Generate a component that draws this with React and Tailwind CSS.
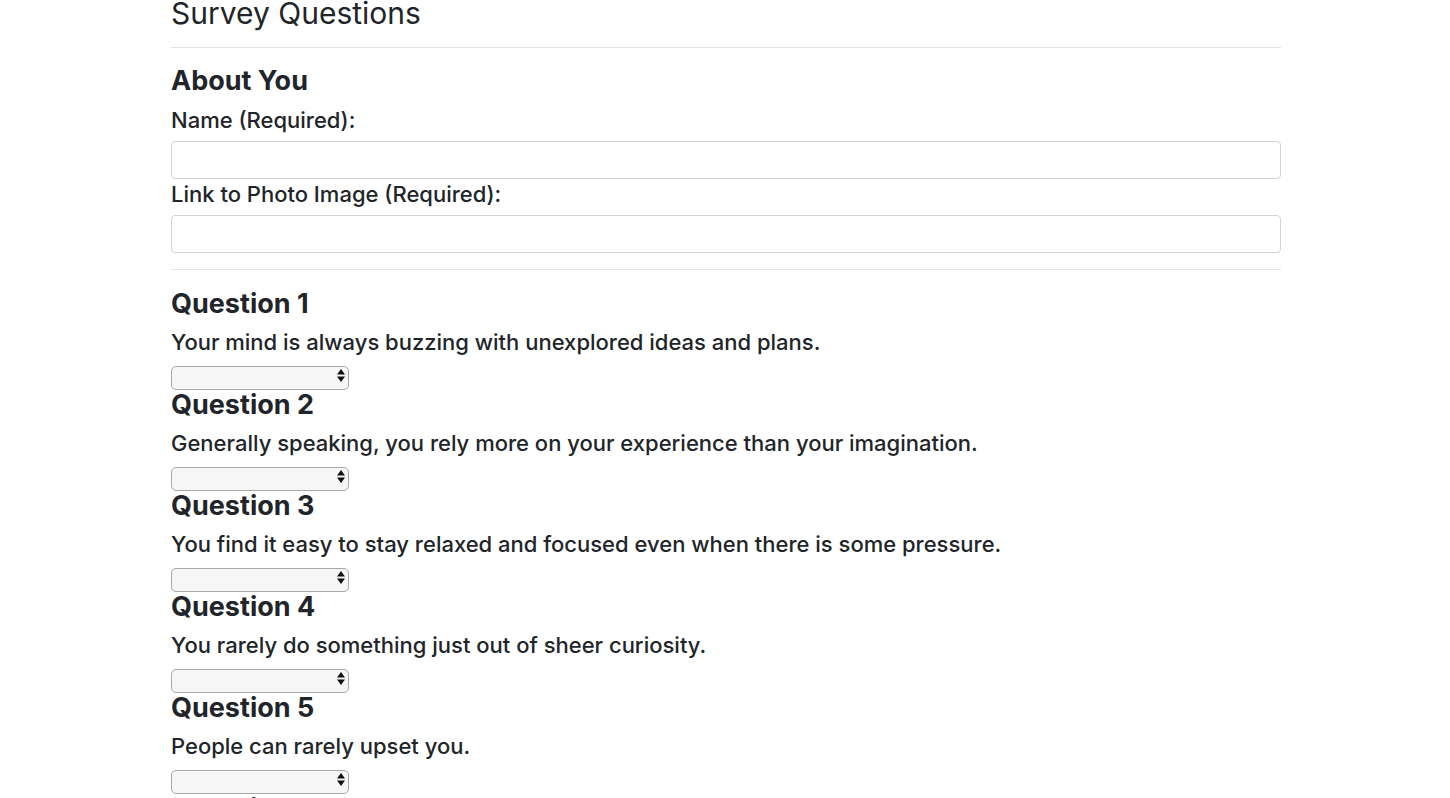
import React from "react";

const questions = [
  "Your mind is always buzzing with unexplored ideas and plans.",
  "Generally speaking, you rely more on your experience than your imagination.",
  "You find it easy to stay relaxed and focused even when there is some pressure.",
  "You rarely do something just out of sheer curiosity.",
  "People can rarely upset you.",
  "You often make a backup plan for a backup plan.",
];

const SelectBox = () => (
  <div className="relative w-[178px] h-[24px]">
    <select className="appearance-none w-full h-full rounded-[5px] border border-[#a9a9a9] bg-[#f6f6f6] text-[13px] px-2 outline-none">
      <option value=""></option>
      <option value="1">1 (Strongly Disagree)</option>
      <option value="2">2</option>
      <option value="3">3</option>
      <option value="4">4</option>
      <option value="5">5 (Strongly Agree)</option>
    </select>
    <svg
      className="pointer-events-none absolute right-[4px] top-[5px]"
      width="8"
      height="13"
      viewBox="0 0 8 13"
    >
      <path d="M4 0 L8 5.5 L0 5.5 Z" fill="#111" />
      <path d="M0 7.5 L8 7.5 L4 13 Z" fill="#111" />
    </svg>
  </div>
);

const App = () => {
  return (
    <div
      className="min-h-screen bg-white text-[#212529] overflow-hidden"
      style={{ fontFamily: "Inter, 'Liberation Sans', sans-serif" }}
    >
      <div className="w-[1110px] ml-[171px] -mt-[6px]">
        <h2 className="text-[30px] leading-[38px] font-normal">
          Survey Questions
        </h2>
        <hr className="mt-[15px] mb-[16px] border-t border-[#e5e5e5]" />
        <h3 className="text-[27px] leading-[34px] font-bold">About You</h3>
        <label className="block mt-[7px] text-[22px] leading-[30px] font-medium">
          Name (Required):
        </label>
        <input
          type="text"
          className="block mt-[6px] w-full h-[38px] rounded-[4px] border border-[#ced4da] px-3"
        />
        <label className="block text-[22px] leading-[30px] font-medium">
          Link to Photo Image (Required):
        </label>
        <input
          type="text"
          className="block mt-[6px] w-full h-[38px] rounded-[4px] border border-[#ced4da] px-3"
        />
        <hr className="mt-[16px] mb-[17px] border-t border-[#e5e5e5]" />
        {questions.map((q, i) => (
          <div key={i} className="flex flex-col">
            <h3 className="text-[27px] leading-[34px] font-bold">
              Question {i + 1}
            </h3>
            <p className="text-[22px] leading-[30px] mt-[6px] mb-[7px] font-medium">
              {q}
            </p>
            <SelectBox />
          </div>
        ))}
      </div>
    </div>
  );
};

export default App;
